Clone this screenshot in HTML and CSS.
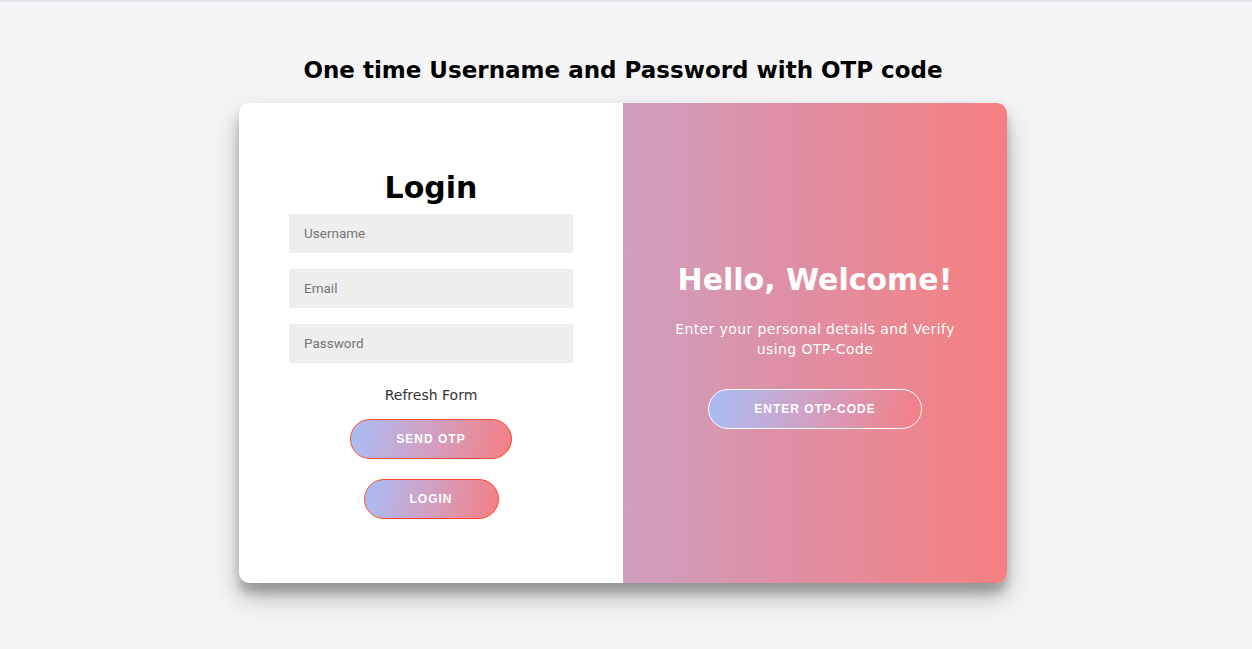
FILE: index.html
```html
<!DOCTYPE html>
<html>
<head>
<meta charset="utf-8">
<link rel="stylesheet" href="styles.css">
</head>
<body>
<div class="topline"></div>
<main class="page">
  <h2 class="title">One time Username and Password with OTP code</h2>
  <div class="card">
    <form class="login">
      <h1 class="login-title">Login</h1>
      <input class="field" type="text" placeholder="Username">
      <input class="field" type="email" placeholder="Email">
      <input class="field" type="password" placeholder="Password">
      <a class="refresh">Refresh Form</a>
      <button type="button" class="btn btn-send">Send OTP</button>
      <button type="button" class="btn btn-login">Login</button>
    </form>
    <div class="welcome">
      <h1 class="welcome-title">Hello, Welcome!</h1>
      <p class="welcome-text">Enter your personal details and Verify using OTP-Code</p>
      <button type="button" class="btn btn-ghost">Enter OTP-Code</button>
    </div>
  </div>
</main>
</body>
</html>
```
FILE: styles.css
```css
* { box-sizing: border-box; }
html, body { margin: 0; padding: 0; }
body {
  background: #f5f5f7;
  font-family: "DejaVu Sans", "Open Sans", sans-serif;
  height: 649px;
  overflow: hidden;
}
.topline { height: 2px; background: #e6e6ea; }
.page {
  display: flex;
  flex-direction: column;
  align-items: center;
  padding-right: 6px;
}
.title {
  margin: 53px 0 0;
  font-size: 23px;
  font-weight: 700;
  color: #000;
  line-height: 30px;
  letter-spacing: 0;
}
.card {
  margin-top: 18px;
  width: 768px;
  height: 480px;
  border-radius: 10px;
  overflow: hidden;
  display: flex;
  background: #fff;
  box-shadow: 0 14px 28px rgba(0,0,0,0.25), 0 10px 10px rgba(0,0,0,0.22);
}
.login {
  width: 384px;
  display: flex;
  flex-direction: column;
  align-items: center;
  justify-content: center;
  padding: 4px 50px 0;
}
.login-title {
  margin: 0 0 10px;
  font-size: 30px;
  line-height: 32px;
  font-weight: 700;
  color: #000;
}
.field {
  width: 284px;
  height: 39px;
  border: none;
  background: #eee;
  margin: 0 0 16px;
  padding: 0 15px;
  font-family: "Roboto", "Liberation Sans", sans-serif;
  font-size: 13.5px;
  outline: none;
}
.field::placeholder { color: #757575; }
.refresh {
  margin: 6px 0 14px;
  font-size: 14px;
  color: #333;
  line-height: 20px;
}
.btn {
  height: 40px;
  border-radius: 20px;
  border: 1px solid #ff4b2b;
  background: linear-gradient(100deg, #a8bdf6 0%, #cfa2c6 45%, #f47f84 100%);
  color: #fff;
  font-family: "Liberation Sans", Arial, sans-serif;
  font-size: 12px;
  font-weight: 700;
  letter-spacing: 1px;
  text-transform: uppercase;
  padding: 0;
}
.btn-send { width: 162px; }
.btn-login { width: 135px; margin-top: 20px; }
.welcome {
  width: 384px;
  display: flex;
  flex-direction: column;
  align-items: center;
  justify-content: center;
  text-align: center;
  padding: 4px 40px 0;
  background: linear-gradient(to right, #cf9fbe 0%, #df8fa3 45%, #f67f80 100%);
  color: #fff;
}
.welcome-title {
  margin: 0;
  font-size: 30px;
  line-height: 36px;
  font-weight: 700;
}
.welcome-text {
  margin: 21px 0 30px;
  font-size: 14px;
  line-height: 20px;
  letter-spacing: 0.4px;
}
.btn-ghost {
  width: 214px;
  height: 40px;
  border-color: #fff;
}
```
